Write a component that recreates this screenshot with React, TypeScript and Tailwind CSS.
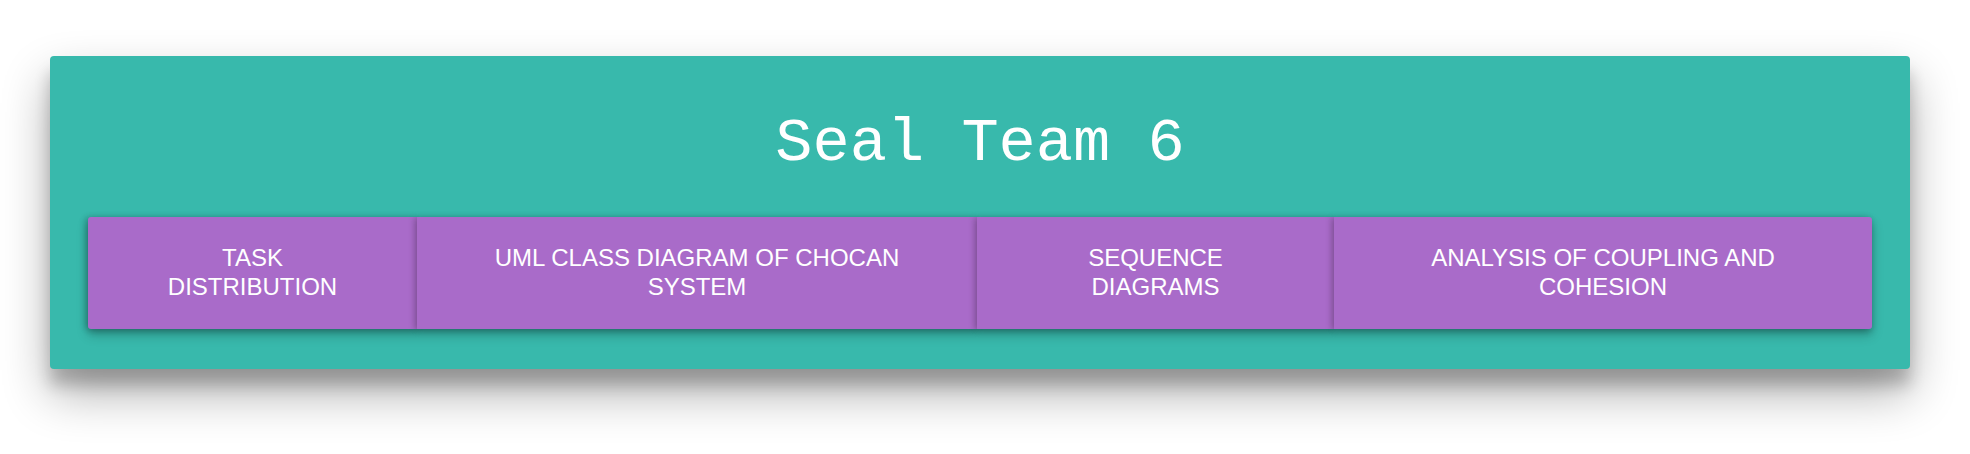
import React from "react";

const items = [
  { label: "Task Distribution", w: "w-[329px]" },
  { label: "UML Class Diagram of ChoCan System", w: "w-[560px]" },
  { label: "Sequence Diagrams", w: "w-[357px]" },
  { label: "Analysis of Coupling and Cohesion", w: "flex-1" },
];

export default function App() {
  return (
    <div className="w-[1970px] h-[454px] bg-white overflow-hidden pt-[56px] pl-[50px]">
      <div className="w-[1860px] h-[313px] bg-[#38b9ac] rounded-[4px] shadow-[0_24px_48px_rgba(0,0,0,0.32),0_16px_16px_rgba(0,0,0,0.2)] pt-[57px] px-[38px] flex flex-col">
        <h1 className="text-center text-white text-[62px] leading-[62px] font-normal font-['Courier_New','Liberation_Mono',monospace]">
          Seal Team 6
        </h1>
        <div className="mt-[42px] h-[112px] flex rounded-[3px] shadow-[0_6px_12px_rgba(0,0,0,0.22)]">
          {items.map((it, i) => (
            <div
              key={i}
              className={`${it.w} relative h-full bg-[#a96bc9] flex items-center justify-center px-[48px] text-center text-white uppercase text-[24px] leading-[1.2] font-['Liberation_Sans',Arial,sans-serif] shadow-[-3px_0_6px_rgba(0,0,0,0.16),0_3px_6px_rgba(0,0,0,0.16)] ${i === 0 ? "rounded-l-[3px]" : ""} ${i === 3 ? "rounded-r-[3px]" : ""}`}
            >
              {it.label}
            </div>
          ))}
        </div>
      </div>
    </div>
  );
}
